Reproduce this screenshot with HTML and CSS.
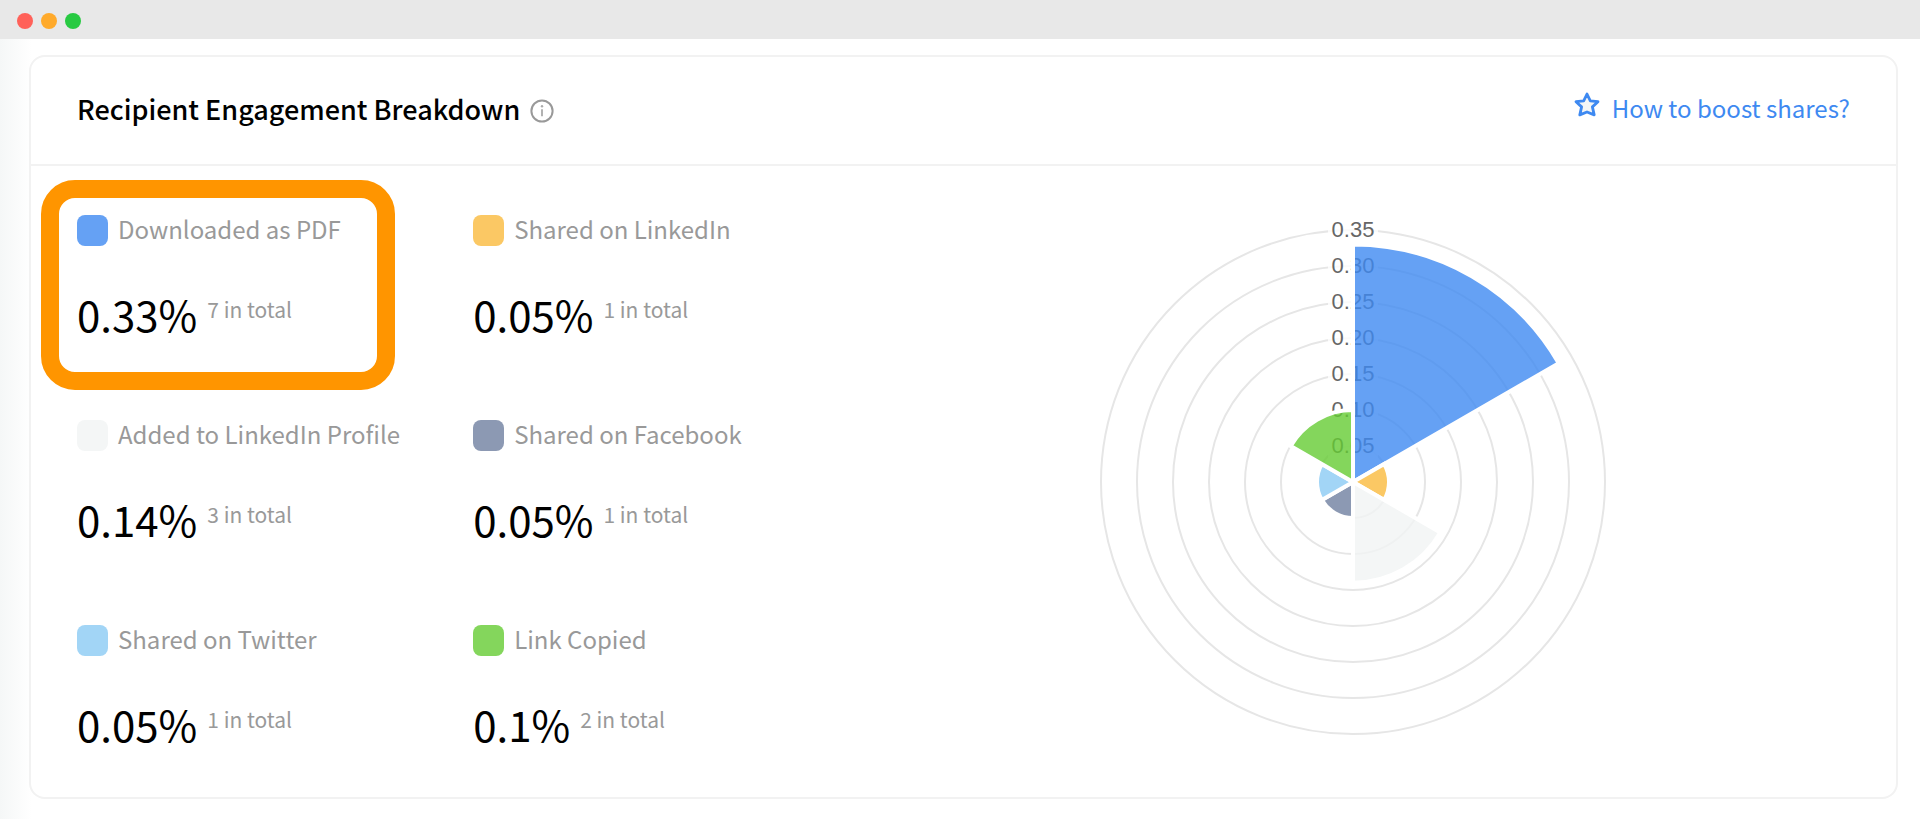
FILE: index.html
```html
<!DOCTYPE html>
<html lang="en">
<head>
	<meta charset="UTF-8">
	<meta name="viewport" content="width=device-width, initial-scale=1">
	<title>Recipient Engagement Breakdown</title>
	<link rel="stylesheet" href="styles.css">
</head>
<body>
<div class="titlebar">
	<span class="dot red"></span>
	<span class="dot orange"></span>
	<span class="dot green"></span>
</div>
<main class="page">
	<section class="card">
		<header class="card-header">
			<h1>Recipient Engagement Breakdown</h1>
			<svg class="info" viewBox="0 0 24 24" role="img" aria-label="Info">
				<circle cx="12" cy="12" r="10.6" fill="none" stroke="#999" stroke-width="2"/>
				<path d="M12 10.2v7" stroke="#aaa" stroke-width="1.8"/>
				<circle cx="12" cy="7.3" r="1.2" fill="#aaa"/>
			</svg>
			<a class="boost" href="#boost">
				<svg class="star" viewBox="0 0 26 26" aria-hidden="true">
					<path d="M13 2l3.3 6.8 7.7.9-5.6 5.2 1.8 8L13 20l-7.2 2.9 1.8-8L2 9.7l7.7-.9z" fill="#f4f6f6" stroke="#3e89f1" stroke-width="2.8" stroke-linejoin="round"/>
				</svg>
				<span>How to boost shares?</span>
			</a>
		</header>
		<div class="card-body">
			<ul class="stats">
				<li class="stat highlight">
					<div class="label"><i class="swatch pdf"></i>Downloaded as PDF</div>
					<div class="value">0.33%<span class="total">7 in total</span></div>
				</li>
				<li class="stat">
					<div class="label"><i class="swatch linkedin"></i>Shared on LinkedIn</div>
					<div class="value">0.05%<span class="total">1 in total</span></div>
				</li>
				<li class="stat">
					<div class="label"><i class="swatch profile"></i>Added to LinkedIn Profile</div>
					<div class="value">0.14%<span class="total">3 in total</span></div>
				</li>
				<li class="stat">
					<div class="label"><i class="swatch facebook"></i>Shared on Facebook</div>
					<div class="value">0.05%<span class="total">1 in total</span></div>
				</li>
				<li class="stat">
					<div class="label"><i class="swatch twitter"></i>Shared on Twitter</div>
					<div class="value">0.05%<span class="total">1 in total</span></div>
				</li>
				<li class="stat">
					<div class="label"><i class="swatch copied"></i>Link Copied</div>
					<div class="value">0.1%<span class="total">2 in total</span></div>
				</li>
			</ul>
			<div class="chart">
				<svg id="polar" viewBox="0 0 532 534" role="img" aria-label="Engagement polar chart"></svg>
			</div>
		</div>
	</section>
</main>
<script src="chart.js"></script>
</body>
</html>
```
FILE: styles.css
```css
*,
*::before {
  box-sizing: border-box;
}
body {
  margin: 0;
  background: #fff;
  color: #000;
  font-family: "Noto Sans CJK JP", "Open Sans", sans-serif;
}
.titlebar {
  display: flex;
  align-items: center;
  gap: 8px;
  height: 39px;
  padding: 2px 17px 0;
  background: #e8e8e8;
}
.dot {
  width: 16px;
  height: 16px;
  border-radius: 50%;
}
.dot.red { background: #ff6159; }
.dot.orange { background: #ffaa2b; }
.dot.green { background: #28ca42; }

.page {
  padding: 16px 22px 21px 29px;
  background: linear-gradient(to right, #f5f7f7, #fff 32px);
}
.card {
  background: #fff;
  border: 2px solid #f2f2f2;
  border-radius: 16px;
}
.card-header {
  display: flex;
  align-items: center;
  height: 109px;
  padding: 0 46px;
  border-bottom: 2px solid #f2f2f2;
}
h1 {
  margin: 0;
  padding-bottom: 4px;
  font-size: 27px;
  line-height: 40px;
  font-weight: 500;
}
.info {
  width: 24px;
  height: 24px;
  margin-left: 10px;
}
.boost {
  display: flex;
  gap: 12px;
  margin-left: auto;
  padding-bottom: 6px;
  font-size: 24px;
  line-height: 32px;
  color: #3e89f1;
  text-decoration: none;
}
.star {
  width: 26px;
  height: 26px;
}

.card-body {
  display: flex;
  gap: 16px;
  padding: 49px 46px 48px;
}
.stats {
  display: grid;
  grid-template-columns: 1fr 1fr;
  align-content: start;
  gap: 82px 30px;
  flex: 0 0 43%;
  margin: 0;
  padding: 0;
  list-style: none;
}
.stat {
  position: relative;
}
/* orange frame around the stat we want to point at */
.highlight::before {
  content: "";
  position: absolute;
  top: -35px;
  left: -36px;
  width: 354px;
  height: 210px;
  border: 18px solid #ff9500;
  border-radius: 34px;
}
.label {
  display: flex;
  gap: 10px;
  height: 31px;
  font-size: 24px;
  line-height: 27px;
  color: #999;
  white-space: nowrap;
}
.swatch {
  width: 31px;
  height: 31px;
  border-radius: 8px;
}
.pdf { background: #65a1f4; }
.linkedin { background: #fbc864; }
.profile { background: #f4f6f6; }
.facebook { background: #8c99b3; }
.twitter { background: #a2d5f6; }
.copied { background: #84d65c; }

.value {
  display: flex;
  gap: 10px;
  margin-top: 44px;
  font-size: 42px;
  line-height: 48px;
}
.total {
  font-size: 21px;
  line-height: 38px;
  color: #999;
}

.chart {
  flex: 1;
}
.chart svg {
  display: block;
  width: 100%;
  max-width: 532px;
  margin: 0 auto;
}
.grid {
  fill: none;
  stroke: #e6e6e6;
  stroke-width: 2;
}
.tick-bg {
  fill: #fff;
  fill-opacity: .8;
}
.tick {
  fill: #666;
  font-family: "Liberation Sans", Arial, sans-serif;
  font-size: 22px;
  text-anchor: middle;
}
.slice {
  fill-opacity: .8;
  stroke: #fff;
  stroke-width: 4;
}

@media (max-width: 1300px) {
  .card-body { flex-direction: column; }
  .stats { flex-basis: auto; }
}
```
FILE: chart.js
```js
var NS = 'http://www.w3.org/2000/svg';
var svg = document.getElementById('polar');
var cx = 266, cy = 267;   // center
var step = 36;            // px per 0.05
var data = [
	{value: 0.33, color: '#3e89f1'},
	{value: 0.05, color: '#faba3d'},
	{value: 0.14, color: '#f1f4f4'},
	{value: 0.05, color: '#6f7fa0'},
	{value: 0.05, color: '#8bcaf4'},
	{value: 0.1, color: '#65cc33'}
];

function add(tag, attrs, text){
	var el = document.createElementNS(NS, tag);
	for (var key in attrs) {
		el.setAttribute(key, attrs[key]);
	}
	if (text) el.textContent = text;
	svg.appendChild(el);
}

for (var i = 1; i <= 7; i++) {
	add('circle', {'class': 'grid', cx: cx, cy: cy, r: step * i});
}
for (i = 1; i <= 7; i++) {
	var y = cy - step * i;
	add('rect', {'class': 'tick-bg', x: cx - 25, y: y - 13, width: 50, height: 26});
	add('text', {'class': 'tick', x: cx, y: y + 7}, (i * 0.05).toFixed(2));
}

// every slice takes the same angle, the value is the radius
data.forEach(function(d, i){
	var r = d.value / 0.05 * step;
	var a1 = Math.PI * 2 / data.length * i;
	var a2 = Math.PI * 2 / data.length * (i + 1);
	var x1 = cx + r * Math.sin(a1), y1 = cy - r * Math.cos(a1);
	var x2 = cx + r * Math.sin(a2), y2 = cy - r * Math.cos(a2);
	add('path', {
		'class': 'slice',
		fill: d.color,
		d: 'M' + cx + ' ' + cy + 'L' + x1 + ' ' + y1 + 'A' + r + ' ' + r + ' 0 0 1 ' + x2 + ' ' + y2 + 'Z'
	});
});
```
